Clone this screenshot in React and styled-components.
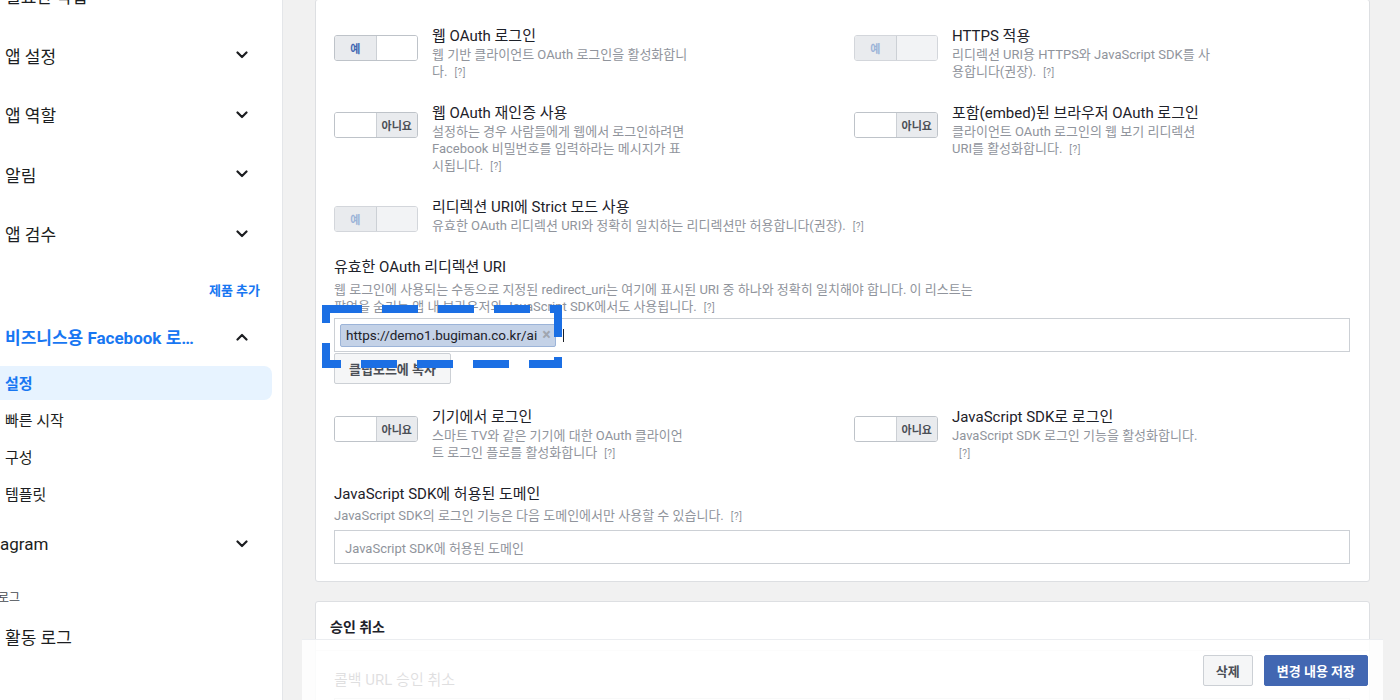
import styled, { createGlobalStyle } from 'styled-components';

const GlobalStyle = createGlobalStyle`
  * { box-sizing: border-box; }
  body {
    margin: 0;
    background: #f1f1f1;
    color: #1d2129;
    font-family: Roboto, "Noto Sans CJK KR", sans-serif;
  }
`;

const Page = styled.div`
  position: relative;
  display: flex;
  width: 1400px;
  height: 700px;
  overflow: hidden;
`;

/* ---------- sidebar ---------- */

const Sidebar = styled.aside`
  width: 283px;
  flex-shrink: 0;
  background: #fff;
  border-right: 1px solid #e4e6e9;
  padding-right: 10px;
  overflow: hidden;
  font-family: Roboto, "Noto Sans CJK KR", sans-serif;
  color: #1c1e21;
`;

const SideInner = styled.div`
  margin-top: -34px;
`;

const NavRow = styled.div`
  height: ${(p) => p.$h || '59.5px'};
  display: flex;
  align-items: center;
  justify-content: space-between;
  padding: 0 24px 0 5px;
  font-size: 17px;
`;

const NavText = styled.span`
  margin-left: ${(p) => p.$shift || '0'};
`;

const AddProduct = styled.div`
  height: 52px;
  display: flex;
  align-items: center;
  justify-content: flex-end;
  padding-right: 12px;
  font-size: 13px;
  font-weight: 600;
  color: #1877f2;
`;

const ProductRow = styled(NavRow)`
  height: 42px;
  margin-bottom: 8px;
  font-weight: 700;
  color: #1877f2;
`;

const ProductName = styled.span`
  max-width: 199px;
  white-space: nowrap;
  overflow: hidden;
  text-overflow: ellipsis;
`;

const SubItem = styled.div`
  height: 34px;
  margin: 0 0 3px -10px;
  padding-left: 15px;
  display: flex;
  align-items: center;
  border-radius: 0 8px 8px 0;
  font-size: 15px;
  background: ${(p) => (p.$active ? '#e7f3ff' : 'transparent')};
  color: ${(p) => (p.$active ? '#1877f2' : '#1c1e21')};
  font-weight: ${(p) => (p.$active ? 700 : 400)};
`;

const SectionLabel = styled.div`
  padding-top: 16px;
  line-height: 16px;
  font-size: 12px;
  color: #444950;
  margin-left: -2px;
`;

const Chevron = ({ up }) => (
  <svg width="12" height="8" viewBox="0 0 12 8">
    <path
      d={up ? 'M1.5 6.5 L6 2 L10.5 6.5' : 'M1.5 1.5 L6 6 L10.5 1.5'}
      fill="none"
      stroke="#1c1e21"
      strokeWidth="2.2"
      strokeLinecap="round"
      strokeLinejoin="round"
    />
  </svg>
);

/* ---------- main ---------- */

const Main = styled.main`
  flex: 1;
  padding: 0 30px 0 32px;
  overflow: hidden;
`;

const Card = styled.section`
  background: #fff;
  border: 1px solid #dddfe2;
  border-radius: 3px;
  margin-top: -1px;
  padding: 27px 19px 17px 18px;
`;

const ToggleGrid = styled.div`
  display: grid;
  grid-template-columns: 520px 1fr;
  row-gap: 23px;
  margin-top: ${(p) => p.$mt || '0'};
`;

const ToggleItem = styled.div`
  display: flex;
  align-items: flex-start;
  gap: 14px;
  grid-column: ${(p) => (p.$wide ? '1 / -1' : 'auto')};
`;

const Switch = styled.div`
  display: flex;
  width: 84px;
  height: 26px;
  flex-shrink: 0;
  margin-top: 8px;
  border: 1px solid ${(p) => (p.$disabled ? '#d3d6db' : '#bec3c9')};
  border-radius: 3px;
  overflow: hidden;
`;

const Segment = styled.span`
  flex: 1;
  display: flex;
  align-items: center;
  justify-content: center;
  font-size: 11px;
  font-weight: 700;
  background: ${(p) => (p.$filled ? '#e9ebee' : p.$disabled ? '#f2f3f5' : '#fff')};
  color: ${(p) => (p.$yes ? (p.$disabled ? '#9cb4d8' : '#4267b2') : '#4b4f56')};
  & + & {
    border-left: 1px solid ${(p) => (p.$disabled ? '#dfe1e5' : '#ccd0d5')};
  }
`;

const TextBlock = styled.div`
  max-width: ${(p) => (p.$wide ? 'none' : '259px')};
`;

const ItemTitle = styled.div`
  font-size: 15px;
  line-height: 19px;
  color: #1d2129;
`;

const Desc = styled.div`
  font-size: 13px;
  line-height: 17px;
  color: #90949c;
  word-break: ${(p) => (p.$keep ? 'keep-all' : 'normal')};
  max-width: ${(p) => p.$max || 'none'};
  margin-top: ${(p) => p.$mt || '0'};
`;

const Help = styled.span`
  display: inline-block;
  padding-left: 7px;
  font-size: 10px;
  letter-spacing: 0.5px;
  color: #90949c;
`;

const Field = styled.div`
  margin-top: ${(p) => p.$mt || '0'};
`;

const TokenInput = styled.div`
  margin-top: 2px;
  height: 34px;
  border: 1px solid #ccd0d5;
  display: flex;
  align-items: center;
  padding: 0 5px;
`;

const Chip = styled.span`
  height: 23px;
  display: inline-flex;
  align-items: center;
  gap: 5px;
  padding: 0 4px 0 5px;
  background: #c4d2e7;
  border: 1px solid #9cb4d8;
  border-radius: 2px;
  font-size: 13.5px;
  color: #1d2129;
`;

const ChipClose = styled.span`
  font-size: 16px;
  line-height: 1;
  font-weight: 700;
  color: #a0a6b0;
`;

const Caret = styled.span`
  width: 1px;
  height: 13px;
  margin-left: 7px;
  background: #1d2129;
`;

const GrayButton = styled.button`
  height: 31px;
  padding: 0 ${(p) => p.$px || '12px'};
  margin-top: ${(p) => p.$mt || '0'};
  background: #f5f6f7;
  border: 1px solid #ccd0d5;
  border-radius: 2px;
  font-family: inherit;
  font-size: ${(p) => p.$fs || '12px'};
  font-weight: 700;
  color: #4b4f56;
`;

const TextInput = styled.div`
  margin-top: 5px;
  height: 34px;
  border: 1px solid #ccd0d5;
  display: flex;
  align-items: center;
  padding-left: 10px;
  font-size: 13px;
  color: #90949c;
`;

const Card2 = styled.section`
  margin-top: 19px;
  background: #fff;
  border: 1px solid #dddfe2;
  border-radius: 3px;
`;

const Card2Header = styled.div`
  height: 49px;
  display: flex;
  align-items: center;
  padding-left: 14px;
  font-size: 14px;
  font-weight: 700;
  color: #1d2129;
  border-bottom: 1px solid #e5e5e5;
`;

const Card2Body = styled.div`
  padding: 20px 19px 0 18px;
`;

const FakeInput = styled.div`
  margin-top: 8px;
  height: 34px;
  border: 1px solid #ccd0d5;
`;

/* ---------- overlays ---------- */

const SaveBar = styled.div`
  position: absolute;
  left: 302px;
  top: 639px;
  width: 1081px;
  height: 61px;
  background: rgba(255, 255, 255, 0.86);
  border-top: 1px solid #ebedf0;
  display: flex;
  justify-content: flex-end;
  align-items: flex-start;
  gap: 11px;
  padding: 15px 15px 0 0;
`;

const BlueButton = styled.button`
  height: 31px;
  padding: 0 12px;
  background: #4267b2;
  border: 1px solid #4267b2;
  border-radius: 2px;
  font-family: inherit;
  font-size: 13px;
  font-weight: 700;
  color: #fff;
`;

const Marquee = styled.svg`
  position: absolute;
  left: 316px;
  top: 301px;
`;

const Toggle = ({ on, disabled }) => (
  <Switch $disabled={disabled}>
    {on ? (
      <>
        <Segment $filled $yes $disabled={disabled}>예</Segment>
        <Segment $disabled={disabled} />
      </>
    ) : (
      <>
        <Segment />
        <Segment $filled>아니요</Segment>
      </>
    )}
  </Switch>
);

const ToggleRow = ({ on, disabled, title, children, wide }) => (
  <ToggleItem $wide={wide}>
    <Toggle on={on} disabled={disabled} />
    <TextBlock $wide={wide}>
      <ItemTitle>{title}</ItemTitle>
      <Desc>
        {children}
        <Help>[?]</Help>
      </Desc>
    </TextBlock>
  </ToggleItem>
);

const App = () => {
  return (
    <>
      <GlobalStyle />
      <Page>
        <Sidebar>
          <SideInner>
            <NavRow>필요한 작업</NavRow>
            <NavRow>앱 설정 <Chevron /></NavRow>
            <NavRow>앱 역할 <Chevron /></NavRow>
            <NavRow>알림 <Chevron /></NavRow>
            <NavRow>앱 검수 <Chevron /></NavRow>
            <AddProduct>제품 추가</AddProduct>
            <ProductRow>
              <ProductName>비즈니스용 Facebook 로그인</ProductName>
              <Chevron up />
            </ProductRow>
            <SubItem $active>설정</SubItem>
            <SubItem>빠른 시작</SubItem>
            <SubItem>구성</SubItem>
            <SubItem>템플릿</SubItem>
            <NavRow $h="60px">
              <NavText $shift="-5px">agram</NavText>
              <Chevron />
            </NavRow>
            <SectionLabel>로그</SectionLabel>
            <NavRow $h="62px">활동 로그</NavRow>
          </SideInner>
        </Sidebar>

        <Main>
          <Card>
            <ToggleGrid>
              <ToggleRow on title="웹 OAuth 로그인">
                웹 기반 클라이언트 OAuth 로그인을 활성화합니다.
              </ToggleRow>
              <ToggleRow on disabled title="HTTPS 적용">
                리디렉션 URI용 HTTPS와 JavaScript SDK를 사용합니다(권장).
              </ToggleRow>
              <ToggleRow title="웹 OAuth 재인증 사용">
                설정하는 경우 사람들에게 웹에서 로그인하려면 Facebook 비밀번호를 입력하라는 메시지가 표시됩니다.
              </ToggleRow>
              <ToggleRow title="포함(embed)된 브라우저 OAuth 로그인">
                클라이언트 OAuth 로그인의 웹 보기 리디렉션 URI를 활성화합니다.
              </ToggleRow>
              <ToggleRow wide on disabled title="리디렉션 URI에 Strict 모드 사용">
                유효한 OAuth 리디렉션 URI와 정확히 일치하는 리디렉션만 허용합니다(권장).
              </ToggleRow>
            </ToggleGrid>

            <Field $mt="23px">
              <ItemTitle>유효한 OAuth 리디렉션 URI</ItemTitle>
              <Desc $keep $max="660px" $mt="4px">
                웹 로그인에 사용되는 수동으로 지정된 redirect_uri는 여기에 표시된 URI 중 하나와 정확히 일치해야 합니다. 이 리스트는 팝업을 숨기는 앱 내 브라우저와 JavaScript SDK에서도 사용됩니다.
                <Help>[?]</Help>
              </Desc>
              <TokenInput>
                <Chip>
                  https://demo1.bugiman.co.kr/ai
                  <ChipClose>×</ChipClose>
                </Chip>
                <Caret />
              </TokenInput>
              <GrayButton $mt="1px" $px="14px" $fs="13px">클립보드에 복사</GrayButton>
            </Field>

            <ToggleGrid $mt="24px">
              <ToggleRow title="기기에서 로그인">
                스마트 TV와 같은 기기에 대한 OAuth 클라이언트 로그인 플로를 활성화합니다
              </ToggleRow>
              <ToggleRow title="JavaScript SDK로 로그인">
                JavaScript SDK 로그인 기능을 활성화합니다.
              </ToggleRow>
            </ToggleGrid>

            <Field $mt="23px">
              <ItemTitle>JavaScript SDK에 허용된 도메인</ItemTitle>
              <Desc $keep $mt="3px">
                JavaScript SDK의 로그인 기능은 다음 도메인에서만 사용할 수 있습니다.
                <Help>[?]</Help>
              </Desc>
              <TextInput>JavaScript SDK에 허용된 도메인</TextInput>
            </Field>
          </Card>

          <Card2>
            <Card2Header>승인 취소</Card2Header>
            <Card2Body>
              <ItemTitle>콜백 URL 승인 취소</ItemTitle>
              <FakeInput />
            </Card2Body>
          </Card2>
        </Main>

        <Marquee width="256" height="74" viewBox="0 0 256 74">
          <rect
            x="10"
            y="8"
            width="232"
            height="55"
            fill="none"
            stroke="#1b6fe4"
            strokeWidth="8"
            strokeDasharray="36 20"
          />
        </Marquee>

        <SaveBar>
          <GrayButton $px="12px" $fs="13px">삭제</GrayButton>
          <BlueButton>변경 내용 저장</BlueButton>
        </SaveBar>
      </Page>
    </>
  );
};

export default App;
